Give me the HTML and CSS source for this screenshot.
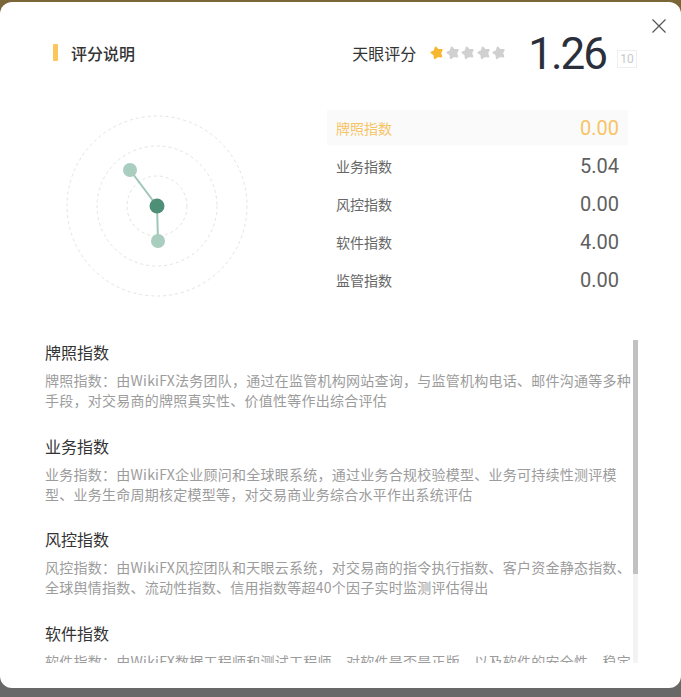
FILE: index.html
```html
<!DOCTYPE html>
<html lang="zh-CN">
<head>
<meta charset="utf-8">
<title>评分说明</title>
<link rel="stylesheet" href="styles.css">
</head>
<body>
<div class="modal">
  <header class="head">
    <div class="title"><span class="bar"></span><h2>评分说明</h2></div>
    <div class="score">
      <span class="score-label">天眼评分</span>
      <span class="stars">
        <svg class="star on" viewBox="0 0 14 14"><polygon points="7,1.3 8.9,4.4 12.4,5.2 10.1,7.9 10.4,11.5 7,10.1 3.6,11.5 3.9,7.9 1.6,5.2 5.1,4.4" transform="rotate(-14 7 7)"/></svg>
        <svg class="star" viewBox="0 0 14 14"><polygon points="7,1.3 8.9,4.4 12.4,5.2 10.1,7.9 10.4,11.5 7,10.1 3.6,11.5 3.9,7.9 1.6,5.2 5.1,4.4" transform="rotate(-14 7 7)"/></svg>
        <svg class="star" viewBox="0 0 14 14"><polygon points="7,1.3 8.9,4.4 12.4,5.2 10.1,7.9 10.4,11.5 7,10.1 3.6,11.5 3.9,7.9 1.6,5.2 5.1,4.4" transform="rotate(-14 7 7)"/></svg>
        <svg class="star" viewBox="0 0 14 14"><polygon points="7,1.3 8.9,4.4 12.4,5.2 10.1,7.9 10.4,11.5 7,10.1 3.6,11.5 3.9,7.9 1.6,5.2 5.1,4.4" transform="rotate(-14 7 7)"/></svg>
        <svg class="star" viewBox="0 0 14 14"><polygon points="7,1.3 8.9,4.4 12.4,5.2 10.1,7.9 10.4,11.5 7,10.1 3.6,11.5 3.9,7.9 1.6,5.2 5.1,4.4" transform="rotate(-14 7 7)"/></svg>
      </span>
      <span class="big">1.26</span>
      <span class="max">10</span>
    </div>
  </header>
  <button class="close" aria-label="关闭">
    <svg viewBox="0 0 16 16" width="16" height="16"><path d="M1.5 1.5 L14.5 14.5 M14.5 1.5 L1.5 14.5"/></svg>
  </button>

  <section class="overview">
    <svg class="radar" width="220" height="200" viewBox="0 0 220 200">
      <g class="rings">
        <circle cx="110" cy="96" r="90"/>
        <circle cx="110" cy="96" r="60"/>
        <circle cx="110" cy="96" r="30"/>
      </g>
      <g class="links">
        <line x1="110" y1="96" x2="83" y2="60"/>
        <line x1="110" y1="96" x2="111" y2="131"/>
      </g>
      <circle class="pt" cx="83" cy="60" r="7"/>
      <circle class="pt" cx="111" cy="131" r="7"/>
      <circle class="core" cx="110" cy="96" r="7.5"/>
    </svg>
    <ul class="indices">
      <li class="active"><span class="name">牌照指数</span><span class="val">0.00</span></li>
      <li><span class="name">业务指数</span><span class="val">5.04</span></li>
      <li><span class="name">风控指数</span><span class="val">0.00</span></li>
      <li><span class="name">软件指数</span><span class="val">4.00</span></li>
      <li><span class="name">监管指数</span><span class="val">0.00</span></li>
    </ul>
  </section>

  <div class="details-wrap">
    <div class="details">
      <div class="item">
        <h3>牌照指数</h3>
        <p>牌照指数：由WikiFX法务团队，通过在监管机构网站查询，与监管机构电话、邮件沟通等多种手段，对交易商的牌照真实性、价值性等作出综合评估</p>
      </div>
      <div class="item">
        <h3>业务指数</h3>
        <p>业务指数：由WikiFX企业顾问和全球眼系统，通过业务合规校验模型、业务可持续性测评模型、业务生命周期核定模型等，对交易商业务综合水平作出系统评估</p>
      </div>
      <div class="item">
        <h3>风控指数</h3>
        <p>风控指数：由WikiFX风控团队和天眼云系统，对交易商的指令执行指数、客户资金静态指数、全球舆情指数、流动性指数、信用指数等超40个因子实时监测评估得出</p>
      </div>
      <div class="item">
        <h3>软件指数</h3>
        <p>软件指数：由WikiFX数据工程师和测试工程师，对软件是否是正版，以及软件的安全性、稳定性、兼容性等进行多维度检测评估得出</p>
      </div>
      <div class="item">
        <h3>监管指数</h3>
        <p>监管指数：由WikiFX合规团队，根据交易商所持监管牌照的类型、监管机构的等级等，对交易商受监管情况作出综合评估</p>
      </div>
    </div>
    <div class="scrollbar"><div class="thumb"></div></div>
  </div>
</div>
</body>
</html>
```

FILE: styles.css
```css
* { box-sizing: border-box; margin: 0; padding: 0; }

html, body { height: 100%; }

body {
  background: linear-gradient(#7a6637 0, #7a6637 20px, #686868 20px);
  font-family: "Noto Sans CJK SC", "Noto Sans", sans-serif;
  overflow: hidden;
}

.modal {
  position: relative;
  margin-top: 2px;
  height: 686px;
  background: #fff;
  border-radius: 12px;
  padding-top: 28px;
}

.head {
  display: flex;
  justify-content: space-between;
  align-items: center;
  height: 48px;
  padding: 0 44px 0 53px;
}

.title {
  display: flex;
  align-items: center;
  gap: 13px;
  margin-top: -3px;
}

.bar {
  width: 5px;
  height: 17px;
  background: #fcc65e;
  border-radius: 1px;
}

.title h2 {
  font-size: 16px;
  font-weight: 500;
  color: #333;
  line-height: 24px;
}

.score {
  display: flex;
  align-items: center;
}

.score-label {
  font-size: 16px;
  color: #333;
  margin-right: 14px;
  margin-top: -2px;
}

.stars {
  display: flex;
  gap: 1.5px;
  margin-top: -3px;
}

.star {
  width: 14px;
  height: 14px;
  fill: #d0d0d0;
  stroke: #d0d0d0;
  stroke-width: 1.8;
  stroke-linejoin: round;
}

.star.on {
  fill: #f6b731;
  stroke: #f6b731;
}

.big {
  margin-left: 22px;
  font-family: Roboto, sans-serif;
  font-size: 44px;
  letter-spacing: -2px;
  color: #2b2f3b;
  line-height: 48px;
}

.max {
  margin-left: 11px;
  margin-top: 10px;
  width: 20px;
  height: 18px;
  border: 1px solid #eee;
  font-family: Roboto, sans-serif;
  font-size: 12px;
  color: #c8c8c8;
  display: flex;
  align-items: center;
  justify-content: center;
}

.close {
  position: absolute;
  top: 16px;
  right: 14px;
  width: 16px;
  height: 16px;
  border: none;
  background: none;
  cursor: pointer;
}

.close svg {
  display: block;
  stroke: #555;
  stroke-width: 1.2;
  fill: none;
}

.overview {
  display: flex;
  margin-top: 32px;
  padding-left: 47px;
  gap: 60px;
  height: 200px;
}

.radar { display: block; flex: none; }

.rings circle {
  fill: none;
  stroke: #e3e3e3;
  stroke-width: 1;
  stroke-dasharray: 3 3;
}

.links line {
  stroke: #9fc6b6;
  stroke-width: 2;
}

.pt { fill: #a9cdbf; }
.core { fill: #4e8f77; }

.indices {
  list-style: none;
  width: 301px;
  display: flex;
  flex-direction: column;
  gap: 4px;
}

.indices li {
  height: 35px;
  display: flex;
  justify-content: space-between;
  align-items: center;
  padding: 0 9px;
}

.indices li + li { margin-top: -1px; }

.indices li.active { background: #fafafa; }

.name {
  font-size: 14px;
  color: #666;
}

.val {
  font-family: Roboto, sans-serif;
  font-size: 20px;
  font-weight: 400;
  color: #606060;
}

.active .name,
.active .val { color: #f7c466; }

.details-wrap {
  display: flex;
  margin: 30px 0 0 45px;
  width: 593px;
  height: 323px;
}

.details {
  width: 588px;
  height: 100%;
  overflow: hidden;
}

.scrollbar {
  width: 5px;
  height: 100%;
  background: #f3f3f3;
}

.thumb {
  height: 234px;
  background: #c1c1c1;
}

.item h3 {
  font-size: 16px;
  font-weight: 400;
  color: #333;
  line-height: 24px;
}

.item p {
  margin-top: 6px;
  font-size: 14px;
  color: #9c9c9c;
  line-height: 20px;
  letter-spacing: 0.25px;
}

.item + .item { margin-top: 23.7px; }
```
